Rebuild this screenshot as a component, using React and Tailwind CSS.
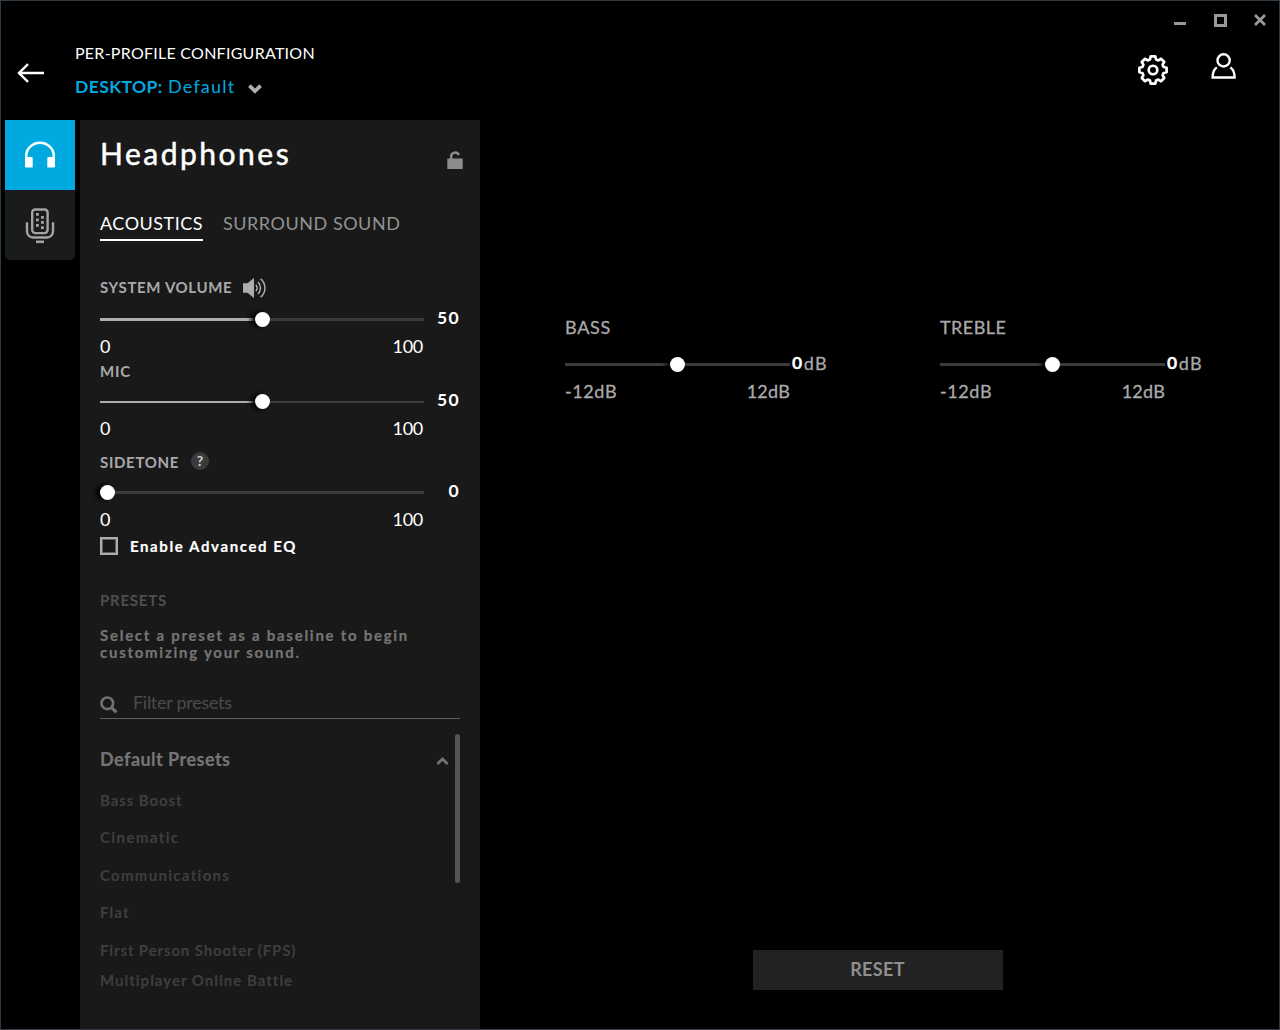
function ArrowLeft() {
  return (
    <svg className="block h-5 w-7" viewBox="0 0 28 20" fill="none" stroke="#fff" strokeWidth="2.4">
      <path d="M27 10H2M11 1.200 2 10l9 8.800" />
    </svg>
  );
}

function Gear() {
  const cx = 16;
  const teeth = [0, 1, 2, 3, 4, 5, 6, 7];
  const point = (r, deg) => {
    const a = (deg * Math.PI) / 180;
    return `${(cx + r * Math.sin(a)).toFixed(2)} ${(cx - r * Math.cos(a)).toFixed(2)}`;
  };
  const d =
    teeth
      .map((i) => {
        const a = i * 45;
        return `${i === 0 ? "M" : "L"}${point(11, a - 16)} L${point(13.8, a - 9.5)} L${point(13.8, a + 9.5)} L${point(11, a + 16)}`;
      })
      .join(" ") + "Z";
  return (
    <svg className="block size-8" viewBox="0 0 32 32" fill="none" stroke="#fff" strokeLinejoin="round">
      <path d={d} strokeWidth="2.7" />
      <circle cx="16" cy="16" r="4.3" strokeWidth="2.6" />
    </svg>
  );
}

function User() {
  return (
    <svg className="block h-[28px] w-[26px]" viewBox="0 0 26 28" fill="none" stroke="#fff" strokeWidth="2.4">
      <circle cx="12.6" cy="8.4" r="6.1" />
      <path d="M5.8 15.4C3 17.5 1.6 20.3 1.6 25.500h22c0-5.200-1.400-8-4.200-10.100" />
    </svg>
  );
}

function Headphones() {
  return (
    <svg className="block h-[28px] w-[30px]" viewBox="0 0 30 28">
      <path d="M1.200 20v-5a13.800 13.300 0 0 1 27.600 0v5" fill="none" stroke="#fff" strokeWidth="2.5" />
      <path d="M0 16h6.500a1.200 1.200 0 0 1 1.200 1.200v9.300H1a1 1 0 0 1-1-1zM30 16h-6.500a1.200 1.200 0 0 0-1.200 1.200v9.300H29a1 1 0 0 0 1-1z" fill="#fff" />
    </svg>
  );
}

function Microphone() {
  return (
    <svg className="block h-[36px] w-[30px]" viewBox="0 0 30 36" fill="none" stroke="#a3a3a3" strokeWidth="2.4">
      <rect x="7.200" y="1.500" width="15.400" height="23.600" rx="3" />
      <path d="M2 14.300v9.200a6 6 0 0 0 6 6h14a6 6 0 0 0 6-6v-9.200" />
      <path d="M11 33.800h8" strokeWidth="2.600" />
      <g fill="#a3a3a3" stroke="none">
        <rect x="11" y="5" width="2.800" height="2.800" />
        <rect x="11" y="10.500" width="2.800" height="2.800" />
        <rect x="11" y="16" width="2.800" height="2.800" />
        <rect x="16" y="8" width="2.800" height="2.800" />
        <rect x="16" y="13" width="2.800" height="2.800" />
        <rect x="16" y="18.300" width="2.800" height="2.800" />
      </g>
    </svg>
  );
}

function Unlock() {
  return (
    <svg className="block h-[18px] w-4" viewBox="0 0 16 18">
      <path d="M4.200 9V4.800a3.900 3.700 0 0 1 7.600-.6" fill="none" stroke="#8c8c8c" strokeWidth="2.4" />
      <path d="M.3 7.500h15.400V18H.3z" fill="#8c8c8c" />
    </svg>
  );
}

function Speaker() {
  return (
    <svg className="block h-5 w-6" viewBox="0 0 24 20">
      <path d="M0 5.300h4.500L11 0v20l-6.500-5.300H0z" fill="#adadb1" />
      <g fill="none" stroke="#adadb1" strokeWidth="1.500">
        <path d="M12.800 6.800c1.700 1.700 1.700 4.700 0 6.400" />
        <path d="M15 4c3.300 3.200 3.300 8.800 0 12" />
        <path d="M17.600.8c5.800 4.800 5.800 13.600 0 18.400" />
      </g>
    </svg>
  );
}

function Search() {
  return (
    <svg className="block size-[18px]" viewBox="0 0 18 18" fill="none" stroke="#727272">
      <circle cx="7.300" cy="7.300" r="5.800" strokeWidth="2.600" />
      <path d="m11.400 11.400 5 5" strokeWidth="3.200" />
    </svg>
  );
}

function Thumb() {
  return <div className="size-[15px] shrink-0 rounded-full bg-white shadow-[-4px_0_5px_#000]" />;
}

const FILL = { 0: "w-0", 50: "w-[155px]" };

function PanelSlider({ value, thin }) {
  return (
    <>
      <div className="flex h-[15px] items-center">
        <div className="flex h-[15px] w-[324px] items-center">
          <div className={`${FILL[value]} ${thin ? "h-[2px]" : "h-[3px]"} bg-[#adadb1]`} />
          <Thumb />
          <div className={`${thin ? "h-[2px]" : "h-[3px]"} flex-1 bg-[#3b3b3b]`} />
        </div>
        <div className="w-[36px] pb-[4px] text-right text-[17.5px] leading-5 font-bold tracking-[1.4px] text-white">{value}</div>
      </div>
      <div className="mt-[9px] flex w-[324px] justify-between text-[18px] leading-5 text-white">
        <span className="tracking-[-0.3px]">0</span>
        <span className="pr-px tracking-[-0.3px]">100</span>
      </div>
    </>
  );
}

function ToneSlider({ label, labelClass }) {
  return (
    <div className="w-[275px] text-[18px] leading-5 text-[#a9a9ab] [-webkit-text-stroke:0.3px]">
      <div className={labelClass}>{label}</div>
      <div className="mt-5 flex h-[15px] items-center">
        <div className="flex w-[225px] items-center">
          <div className="h-[3px] w-[105px] bg-[#3b3b3b]" />
          <Thumb />
          <div className="h-[3px] flex-1 bg-[#3b3b3b]" />
        </div>
        <div className="flex pb-[4px] pl-[2px]">
          <span className="text-[17.5px] font-bold tracking-[1.5px] text-white">0</span>
          <span className="tracking-[1.500px]">dB</span>
        </div>
      </div>
      <div className="mt-[9px] flex w-[225px] justify-between">
        <span className="tracking-[0.600px]">-12dB</span>
        <span className="tracking-[0.200px]">12dB</span>
      </div>
    </div>
  );
}

const PRESETS = [
  { name: "Bass Boost", cls: "mt-[21px] tracking-[0.920px]" },
  { name: "Cinematic", cls: "mt-[17px] tracking-[1.400px]" },
  { name: "Communications", cls: "mt-[18px] tracking-[1.300px]" },
  { name: "Flat", cls: "mt-[17px] tracking-[1.130px]" },
  { name: "First Person Shooter (FPS)", cls: "mt-[18px] tracking-[0.860px]" },
  { name: "Multiplayer Online Battle", cls: "mt-[10px] tracking-[1px]" },
];

export default function App() {
  return (
    <div className="flex h-[1030px] w-[1280px] flex-col overflow-hidden border border-[#303a42] border-b-[#39383f] bg-black font-['Lato',sans-serif]">
      <header className="flex h-[119px] shrink-0 justify-between">
        <div className="flex">
          <div className="mt-[62px] ml-4">
            <ArrowLeft />
          </div>
          <div className="mt-[42px] ml-[30px]">
            <div className="text-[16px] leading-5 tracking-[0.260px] text-white">PER-PROFILE CONFIGURATION</div>
            <div className="mt-[13px] flex items-start text-[18px] leading-5 text-[#00a9e0]">
              <span className="w-[93px] pt-px text-[17.5px] font-bold tracking-[0.400px]">DESKTOP:</span>
              <span className="w-[80px] tracking-[1.200px]">Default</span>
              <svg className="mt-2 block h-[10px] w-[14px]" viewBox="0 0 14 10" fill="none" stroke="#adadad" strokeWidth="3.800">
                <path d="m1.400 1.600 5.600 5.500 5.600-5.500" />
              </svg>
            </div>
          </div>
        </div>
        <div className="flex flex-col items-end">
          <div className="mt-[12px] mr-[12px] flex h-[14px] gap-[27px]">
            <div className="mt-[9px] mr-px h-[3px] w-3 bg-[#999999]" />
            <div className="mt-px size-[13px] border-[3px] border-[#999999]" />
            <svg className="mt-px mr-px block size-3" viewBox="0 0 12 12" stroke="#999999" strokeWidth="2.800">
              <path d="m1 1 10 10M11 1 1 11" />
            </svg>
          </div>
          <div className="mt-[25px] mr-[42px] flex gap-[42px]">
            <div className="mt-[2px]">
              <Gear />
            </div>
            <User />
          </div>
        </div>
      </header>

      <div className="flex min-h-0 flex-1">
        <nav className="mr-[5px] ml-1 w-[70px]">
          <div className="flex h-[70px] justify-center bg-[#00a9e0] pt-[21px]">
            <Headphones />
          </div>
          <div className="flex h-[70px] justify-center rounded-b-[5px] bg-[#1a1b1d] pt-[18px]">
            <Microphone />
          </div>
        </nav>

        <section className="w-[400px] shrink-0 bg-[#191919] px-5 pt-[13px]">
          <div className="flex justify-between">
            <h1 className="text-[30px] leading-10 tracking-[2.500px] text-white [-webkit-text-stroke:0.5px]">Headphones</h1>
            <div className="mt-[18px] mr-[-3px]">
              <Unlock />
            </div>
          </div>

          <div className="mt-[38px] flex gap-5 text-[18px] leading-6">
            <div className="h-[30px] w-[103px] border-b-2 border-white tracking-[0.500px] whitespace-nowrap text-white">ACOUSTICS</div>
            <div className="tracking-[0.530px] text-[#929292]">SURROUND SOUND</div>
          </div>

          <div className="mt-9 flex h-5 text-[15px] leading-5 text-[#a9a9ab]">
            <span className="w-[143px] font-bold tracking-[0.640px]">SYSTEM VOLUME</span>
            <div className="mt-px">
              <Speaker />
            </div>
          </div>
          <div className="mt-[15px]">
            <PanelSlider value={50} />
          </div>

          <div className="mt-[5px] text-[15px] leading-5 font-bold tracking-[0.800px] text-[#a9a9ab]">MIC</div>
          <div className="mt-[13px]">
            <PanelSlider value={50} thin />
          </div>

          <div className="mt-[14px] flex h-5 text-[15px] leading-5 text-[#a9a9ab]">
            <span className="w-[91px] font-bold tracking-[0.670px]">SIDETONE</span>
            <span className="size-[18px] rounded-full bg-[#3b3b3b] text-center text-[14px] leading-[18px] font-bold text-[#d0d0d0]">?</span>
          </div>
          <div className="mt-[13px]">
            <PanelSlider value={0} />
          </div>

          <div className="mt-[7px] flex h-5 items-center">
            <div className="size-[18px] border-2 border-[#adadb1]">
              <div className="size-full border border-[#606062]" />
            </div>
            <span className="pl-3 text-[15px] leading-5 font-bold tracking-[1.600px] text-white [-webkit-text-stroke:0.2px]">
              Enable Advanced EQ
            </span>
          </div>

          <div className="mt-[34px] text-[15px] leading-5 font-bold tracking-[0.750px] text-[#4e4e4e]">PRESETS</div>
          <p className="mt-[17px] text-[15px] leading-[17px] font-bold tracking-[1.730px] whitespace-nowrap text-[#757575] [-webkit-text-stroke:0.2px]">
            Select a preset as a baseline to begin
            <br />
            customizing your sound.
          </p>

          <div className="mt-[31px] flex h-[27px] border-b border-[#5c5c5c]">
            <div className="mt-1">
              <Search />
            </div>
            <span className="pl-[15px] text-[18px] leading-5 tracking-[-0.280px] text-[#4b4b4b]">Filter presets</span>
          </div>

          <div className="mt-[15px] flex justify-between">
            <div className="pt-[15px]">
              <div className="text-[18px] leading-5 font-bold tracking-[0.470px] text-[#757575] [-webkit-text-stroke:0.2px]">Default Presets</div>
              {PRESETS.map((p) => (
                <div key={p.name} className={`${p.cls} text-[15px] leading-5 font-bold text-[#3f3f3f]`}>
                  {p.name}
                </div>
              ))}
            </div>
            <div className="flex">
              <svg className="mt-[23px] mr-[6px] block h-2 w-[13px]" viewBox="0 0 13 8" fill="none" stroke="#727272" strokeWidth="2.800">
                <path d="m1.400 7 5.100-5 5.100 5" />
              </svg>
              <div className="h-[149px] w-[5px] rounded-full bg-[#555555]" />
            </div>
          </div>
        </section>

        <main className="flex flex-1 flex-col justify-between pt-[197px] pb-[39px] pl-[85px]">
          <div className="flex gap-[100px]">
            <ToneSlider label="BASS" labelClass="tracking-[0.700px]" />
            <ToneSlider label="TREBLE" labelClass="tracking-[0.450px]" />
          </div>
          <button className="ml-[188px] h-10 w-[250px] bg-[#222222] pr-px pb-[3px] text-[18px] leading-5 font-bold tracking-[0.350px] text-[#8f8f8f]">
            RESET
          </button>
        </main>
      </div>
    </div>
  );
}
